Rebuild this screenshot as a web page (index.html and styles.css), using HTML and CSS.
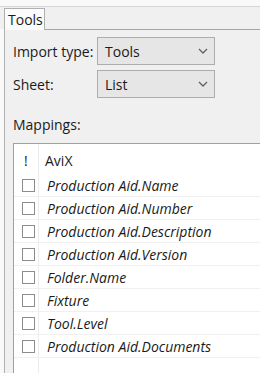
FILE: index.html
```html
<!DOCTYPE html>
<html>
<head>
<meta charset="utf-8">
<link rel="stylesheet" href="styles.css">
</head>
<body>
<div class="strip">
  <div class="tab">Tools</div>
</div>
<div class="panel">
  <div class="field">
    <span class="label">Import type:</span>
    <div class="select"><span>Tools</span><svg class="chev" width="10" height="6" viewBox="0 0 10 6"><path d="M1 1 L5 5 L9 1" fill="none" stroke="#606060" stroke-width="1.3"/></svg></div>
  </div>
  <div class="field">
    <span class="label">Sheet:</span>
    <div class="select"><span>List</span><svg class="chev" width="10" height="6" viewBox="0 0 10 6"><path d="M1 1 L5 5 L9 1" fill="none" stroke="#606060" stroke-width="1.3"/></svg></div>
  </div>
  <div class="mappings">Mappings:</div>
  <div class="list">
    <div class="head">
      <div class="c1">!</div>
      <div class="c2">AviX</div>
    </div>
    <div class="row"><div class="c1"><span class="box"></span></div><div class="c2 it">Production Aid.Name</div></div>
    <div class="row"><div class="c1"><span class="box"></span></div><div class="c2 it">Production Aid.Number</div></div>
    <div class="row"><div class="c1"><span class="box"></span></div><div class="c2 it">Production Aid.Description</div></div>
    <div class="row"><div class="c1"><span class="box"></span></div><div class="c2 it">Production Aid.Version</div></div>
    <div class="row"><div class="c1"><span class="box"></span></div><div class="c2 it">Folder.Name</div></div>
    <div class="row"><div class="c1"><span class="box"></span></div><div class="c2 it">Fixture</div></div>
    <div class="row"><div class="c1"><span class="box"></span></div><div class="c2 it">Tool.Level</div></div>
    <div class="row"><div class="c1"><span class="box"></span></div><div class="c2 it">Production Aid.Documents</div></div>
  </div>
</div>
</body>
</html>
```
FILE: styles.css
```css
html, body {
  margin: 0;
  padding: 0;
}
body {
  width: 260px;
  height: 373px;
  overflow: hidden;
  background: #f9f9f9;
  font-family: "Open Sans", "Noto Sans", sans-serif;
  font-size: 14px;
  color: #1a1a1a;
  display: flex;
  flex-direction: column;
}
.strip {
  margin-top: 6px;
  border-top: 1px solid #d4d4d4;
  background: #f0f0f0;
  height: 22px;
  flex: none;
  padding-left: 4px;
  display: flex;
  align-items: flex-end;
}
.tab {
  height: 22px;
  box-sizing: border-box;
  border: 1px solid #b0b0b0;
  border-bottom: none;
  background: #fbfbfb;
  padding: 0 3px;
  width: 41px;
  display: flex;
  align-items: center;
  position: relative;
  z-index: 1;
  margin-bottom: -1px;
}
.panel {
  flex: 1;
  min-height: 0;
  margin-left: 4px;
  border-left: 1px solid #b0b0b0;
  border-top: 1px solid #a6a6a6;
  background: #f0f0f0;
  padding: 7px 0 0 8px;
  display: flex;
  flex-direction: column;
}
.field {
  display: flex;
  align-items: center;
  margin-bottom: 5px;
  flex: none;
}
.label {
  width: 84px;
}
.select {
  width: 118px;
  height: 28px;
  box-sizing: border-box;
  border: 1px solid #adadad;
  background: #e6e6e6;
  display: flex;
  align-items: center;
  justify-content: space-between;
  padding: 0 6px 0 7px;
}
.chev {
  display: block;
}
.mappings {
  margin-top: 11px;
  height: 22px;
  line-height: 22px;
  flex: none;
}
.list {
  flex: 1;
  min-height: 0;
  margin-top: 7px;
  border-top: 1px solid #a0a0a0;
  border-left: 1px solid #a0a0a0;
  background: #fff linear-gradient(to right, transparent 24px, #ececec 24px, #ececec 25px, transparent 25px);
  overflow: hidden;
}
.head {
  display: flex;
  height: 30px;
  align-items: center;
  padding-top: 2px;
  box-sizing: border-box;
}
.head .c1 {
  width: 25px;
  padding-left: 10px;
  box-sizing: border-box;
}
.head .c2 {
  padding-left: 6px;
}
.row {
  display: flex;
  height: 23px;
  box-sizing: border-box;
  border-bottom: 1px solid #f0f0f0;
  align-items: center;
}
.row .c1 {
  width: 25px;
  padding-left: 8px;
  box-sizing: border-box;
  display: flex;
  align-items: center;
}
.box {
  width: 13px;
  height: 13px;
  box-sizing: border-box;
  border: 1px solid #8c8c8c;
  background: #fff;
}
.row .c2 {
  padding-left: 8px;
}
.it {
  font-style: italic;
}
```
